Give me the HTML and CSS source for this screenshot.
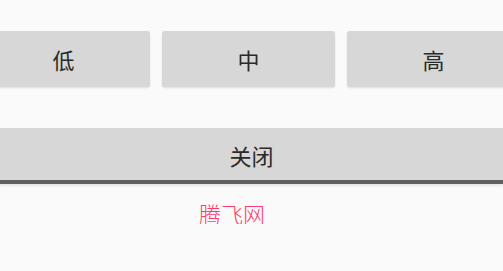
FILE: index.html
```html
<!DOCTYPE html>
<html lang="zh">
<head>
<meta charset="utf-8">
<link rel="stylesheet" href="styles.css">
</head>
<body>
<div class="levels">
  <div class="btn">低</div>
  <div class="btn">中</div>
  <div class="btn">高</div>
</div>
<div class="close">关闭</div>
<div class="brand">腾飞网</div>
</body>
</html>
```
FILE: styles.css
```css
html, body {
  margin: 0;
  padding: 0;
  background: #fafafa;
  font-family: "Noto Sans CJK SC", "Noto Sans", sans-serif;
  overflow: hidden;
}
.levels {
  display: flex;
  gap: 12px;
  margin-left: -23px;
  padding-top: 31px;
}
.btn {
  flex: 0 0 173px;
  height: 56px;
  background: #d6d7d6;
  border-radius: 3px;
  box-shadow: 0 1px 2px rgba(0,0,0,0.12);
  display: flex;
  align-items: center;
  justify-content: center;
  font-size: 22px;
  color: #2a2a2a;
}
.close {
  margin-top: 41px;
  height: 56px;
  box-sizing: border-box;
  padding-top: 1px;
  background: #d6d7d6;
  border-bottom: 4px solid #5f6160;
  box-shadow: 0 2px 2px rgba(0,0,0,0.08);
  display: flex;
  align-items: center;
  justify-content: center;
  font-size: 22px;
  color: #2a2a2a;
}
.brand {
  margin-top: 18px;
  padding-left: 199px;
  font-size: 22px;
  font-weight: 300;
  line-height: 22px;
  color: #fa3c6a;
}
```
